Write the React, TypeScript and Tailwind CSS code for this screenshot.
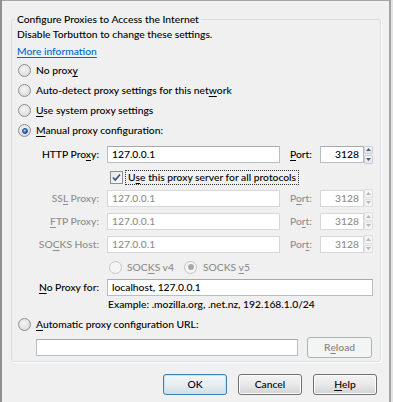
import React from "react";

const U = ({ c }: { c: string }) => (
  <span className="underline decoration-1 underline-offset-[1.5px]">{c}</span>
);

function Radio({ checked = false, disabled = false }: { checked?: boolean; disabled?: boolean }) {
  return (
    <span
      className={`inline-flex w-[13px] h-[13px] rounded-full border items-center justify-center shrink-0 ${
        disabled
          ? "border-[#c4c4c4] bg-[#f5f5f5]"
          : "border-[#8e8f8f] bg-[radial-gradient(circle_at_45%_40%,#f4f4f4,#e4e4e4_55%,#c9c9c9)]"
      }`}
    >
      {checked && (
        <span
          className={`w-[6px] h-[6px] rounded-full ${
            disabled
              ? "bg-[#a9a9a9]"
              : "bg-[radial-gradient(circle_at_40%_35%,#a6dbff,#2a76c6_55%,#173f74)] border border-[#1d4a83]"
          }`}
        />
      )}
    </span>
  );
}

function Checkbox() {
  return (
    <span className="inline-flex w-[13px] h-[13px] border border-[#8e8f8f] bg-gradient-to-br from-[#e6e6e6] to-[#fafafa] items-center justify-center shrink-0">
      <svg width="11" height="11" viewBox="0 0 11 11">
        <path d="M2 5.5 L4.3 8 L9 2.5" fill="none" stroke="#3b4f8a" strokeWidth="1.7" />
      </svg>
    </span>
  );
}

function Field({
  value,
  disabled = false,
  className = "",
  right = false,
}: {
  value: string;
  disabled?: boolean;
  className?: string;
  right?: boolean;
}) {
  return (
    <div
      className={`h-[17px] bg-white border flex items-center px-[4px] shrink-0 ${right ? "justify-end" : ""} ${
        disabled
          ? "border-[#d7d7d7] text-[#8e8e8e]"
          : "border-[#b8bcc4] border-t-[#a6a9b0] text-black"
      } ${className}`}
    >
      {value}
    </div>
  );
}

function Spinner({ disabled = false }: { disabled?: boolean }) {
  const arrow = disabled ? "#b8b8b8" : "#4a5e85";
  const box = disabled
    ? "border-[#e0e0e0] bg-[#f4f4f4]"
    : "border-[#c9ced8] bg-gradient-to-b from-[#f7f7f7] to-[#e2e4e8]";
  return (
    <div className="flex flex-col w-[9px] h-[18px] gap-[1px] shrink-0">
      <div className={`flex-1 border rounded-[1px] flex items-center justify-center ${box}`}>
        <svg width="5" height="3" viewBox="0 0 5 3">
          <path d="M0 3 L2.5 0 L5 3Z" fill={arrow} />
        </svg>
      </div>
      <div className={`flex-1 border rounded-[1px] flex items-center justify-center ${box}`}>
        <svg width="5" height="3" viewBox="0 0 5 3">
          <path d="M0 0 L2.5 3 L5 0Z" fill={arrow} />
        </svg>
      </div>
    </div>
  );
}

function Btn({
  children,
  def = false,
  disabled = false,
  className = "",
}: {
  children: React.ReactNode;
  def?: boolean;
  disabled?: boolean;
  className?: string;
}) {
  const cls = disabled
    ? "border-[#adb2b5] bg-[#f4f4f4] text-[#838383]"
    : def
    ? "border-[#3c7fb1] bg-gradient-to-b from-[#f2f6f9] via-[#e8eef2] to-[#d3dde4] shadow-[inset_0_0_0_1px_#c4e5f6] text-black"
    : "border-[#707070] bg-gradient-to-b from-[#f3f3f3] via-[#e9e9e9] to-[#d2d2d2] shadow-[inset_0_0_0_1px_#fcfcfc] text-black";
  return (
    <div className={`h-[21px] rounded-[3px] border flex items-center justify-center shrink-0 ${cls} ${className}`}>
      {children}
    </div>
  );
}

function ProxyRow({
  label,
  portLabel,
  value,
  disabled,
  className = "",
}: {
  label: React.ReactNode;
  portLabel: React.ReactNode;
  value: string;
  disabled: boolean;
  className?: string;
}) {
  return (
    <div className={`flex items-center ${className}`}>
      <div className={`w-[87px] text-right shrink-0 ${disabled ? "text-[#8e8e8e]" : ""}`}>{label}</div>
      <Field value={value} disabled={disabled} className="ml-[8px] w-[173px]" />
      <div className={`ml-[10px] w-[30px] shrink-0 ${disabled ? "text-[#8e8e8e]" : ""}`}>{portLabel}</div>
      <Field value="3128" disabled={disabled} right className="w-[44px]" />
      <Spinner disabled={disabled} />
    </div>
  );
}

export default function App() {
  return (
    <div className="w-[393px] h-[402px] bg-[#f0f0f0] flex overflow-hidden text-[10.3px] font-medium leading-none text-black font-['Lato',sans-serif]">
      <div className="w-[2px] bg-[#8f8f8f] shrink-0" />
      <div className="flex-1 flex flex-col border-t border-[#a4a4a4] min-w-0">
        <fieldset className="ml-[9px] mt-[10px] w-[370px] border border-[#d5dfe5] rounded-[3px] shadow-[1px_1px_0_#ffffff] pb-[4px]">
          <legend className="ml-[3px] px-[2px] h-[16px] leading-[16px] bg-[#f0f0f0]">
            Configure Proxies to Access the Internet
          </legend>
          <div className="flex flex-col">
            <div className="h-[15px] flex items-center pl-[5px]">Disable Torbutton to change these settings.</div>
            <div className="h-[18px] flex items-center pl-[5px]">
              <span className="text-[#0066cc] underline decoration-1 underline-offset-[1.5px]">More information</span>
            </div>
            <div className="h-[20px] flex items-center pl-[6px] gap-[5px]">
              <Radio />
              <span>
                No prox<U c="y" />
              </span>
            </div>
            <div className="h-[20px] flex items-center pl-[6px] gap-[5px]">
              <Radio />
              <span>
                Auto-detect proxy settings for this net<U c="w" />ork
              </span>
            </div>
            <div className="h-[20px] flex items-center pl-[6px] gap-[5px]">
              <Radio />
              <span>
                <U c="U" />se system proxy settings
              </span>
            </div>
            <div className="h-[21px] flex items-center pl-[6px] gap-[5px]">
              <Radio checked />
              <span>
                <U c="M" />anual proxy configuration:
              </span>
            </div>
            <ProxyRow
              className="mt-[4px] h-[19px]"
              label={
                <>
                  HTTP Pro<U c="x" />y:
                </>
              }
              portLabel={
                <>
                  <U c="P" />ort:
                </>
              }
              value="127.0.0.1"
              disabled={false}
            />
            <div className="mt-[3px] h-[20px] flex items-center pl-[98px]">
              <Checkbox />
              <span className="ml-[2px] border border-dotted border-[#333] px-[2px] h-[15px] flex items-center">
                U<U c="s" />e this proxy server for all protocols
              </span>
            </div>
            <ProxyRow
              className="mt-[2px] h-[18px]"
              label={
                <>
                  SS<U c="L" /> Proxy:
                </>
              }
              portLabel={
                <>
                  P<U c="o" />rt:
                </>
              }
              value="127.0.0.1"
              disabled
            />
            <ProxyRow
              className="mt-[5px] h-[18px]"
              label={
                <>
                  <U c="F" />TP Proxy:
                </>
              }
              portLabel={
                <>
                  Po<U c="r" />t:
                </>
              }
              value="127.0.0.1"
              disabled
            />
            <ProxyRow
              className="mt-[5px] h-[18px]"
              label={
                <>
                  SO<U c="C" />KS Host:
                </>
              }
              portLabel={
                <>
                  Por<U c="t" />:
                </>
              }
              value="127.0.0.1"
              disabled
            />
            <div className="mt-[4px] h-[20px] flex items-center pl-[97px] text-[#8e8e8e]">
              <div className="w-[75px] flex items-center gap-[5px] shrink-0">
                <Radio disabled />
                <span>
                  SOC<U c="K" />S v4
                </span>
              </div>
              <div className="flex items-center gap-[6px]">
                <Radio disabled checked />
                <span>
                  SOCKS <U c="v" />5
                </span>
              </div>
            </div>
            <div className="mt-[1px] h-[18px] flex items-center">
              <div className="w-[87px] text-right shrink-0">
                <U c="N" />o Proxy for:
              </div>
              <Field value="localhost, 127.0.0.1" className="ml-[8px] w-[266px]" />
            </div>
            <div className="h-[16px] flex items-center pl-[96px]">Example: .mozilla.org, .net.nz, 192.168.1.0/24</div>
            <div className="mt-[2px] h-[20px] flex items-center pl-[6px] gap-[5px]">
              <Radio />
              <span>
                <U c="A" />utomatic proxy configuration URL:
              </span>
            </div>
            <div className="mt-[3px] h-[20px] flex items-center pl-[24px]">
              <Field value="" className="w-[262px]" />
              <Btn disabled className="ml-[9px] w-[65px] h-[20px]">
                R<U c="e" />load
              </Btn>
            </div>
          </div>
        </fieldset>
        <div className="mt-[12px] flex justify-end pr-[12px] gap-[11px]">
          <Btn def className="w-[64px]">
            OK
          </Btn>
          <Btn className="w-[64px]">Cancel</Btn>
          <Btn className="w-[64px]">
            <U c="H" />elp
          </Btn>
        </div>
      </div>
      <div className="w-[2px] bg-[#a3a3a3] shrink-0" />
      <div className="w-[2px] bg-[#e4e4e4] shrink-0" />
    </div>
  );
}
